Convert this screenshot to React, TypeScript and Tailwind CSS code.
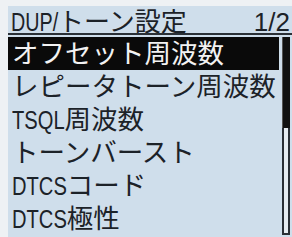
import React, { useLayoutEffect, useRef, useState } from "react";

function Narrow({ children, s }: { children: React.ReactNode; s: number }) {
  const ref = useRef<HTMLSpanElement>(null);
  const [w, setW] = useState<number | null>(null);
  useLayoutEffect(() => {
    if (ref.current) setW(ref.current.offsetWidth);
  }, []);
  return (
    <span
      className="inline-block overflow-visible whitespace-nowrap"
      style={{ width: w === null ? undefined : w * s }}
    >
      <span
        ref={ref}
        className="inline-block origin-left whitespace-nowrap"
        style={{ transform: `scaleX(${s})` }}
      >
        {children}
      </span>
    </span>
  );
}

const rows: { l?: string; t: string; sel?: boolean }[] = [
  { t: "オフセット周波数", sel: true },
  { t: "レピータトーン周波数" },
  { l: "TSQL", t: "周波数" },
  { t: "トーンバースト" },
  { l: "DTCS", t: "コード" },
  { l: "DTCS", t: "極性" },
];

export default function App() {
  return (
    <div className="w-[292px] h-[237px] bg-[#eef1f4] pl-[8px] pt-[6px] overflow-hidden font-['Liberation_Sans','Noto_Sans_CJK_JP',sans-serif] text-[#1c2228]">
      <div className="w-[284px] h-[231px] bg-[#cfdeeb] flex flex-col">
        <div className="h-[27px] flex justify-between items-start pt-[4px] pl-[3px] pr-[2px] text-[26px] leading-[24px]">
          <span className="flex whitespace-nowrap">
            <Narrow s={0.76}>DUP/</Narrow>
            <span>トーン設定</span>
          </span>
          <span>1/2</span>
        </div>
        <div className="h-[2px] bg-[#2a3036]" />
        <div className="h-[2px]" />
        <div className="flex flex-1">
          <div className="w-[271px] flex flex-col">
            {rows.map((r, i) => (
              <div
                key={i}
                className={
                  "h-[33px] pl-[4px] text-[26.5px] leading-[34px] whitespace-nowrap flex " +
                  (r.sel ? "bg-[#0a0a0a] text-[#f2f2f2]" : "")
                }
              >
                {r.l && <Narrow s={0.76}>{r.l}</Narrow>}
                <span>{r.t}</span>
              </div>
            ))}
          </div>
          <div className="w-[3px]" />
          <div className="w-[8px] flex flex-col">
            <div className="h-[91px] bg-[#111] border-l border-[#555]" />
            <div className="h-[105px] border-x-2 border-[#2a2f35] bg-[#e6ecf1]" />
            <div className="h-[2px] bg-[#2a2f35]" />
          </div>
        </div>
      </div>
    </div>
  );
}
